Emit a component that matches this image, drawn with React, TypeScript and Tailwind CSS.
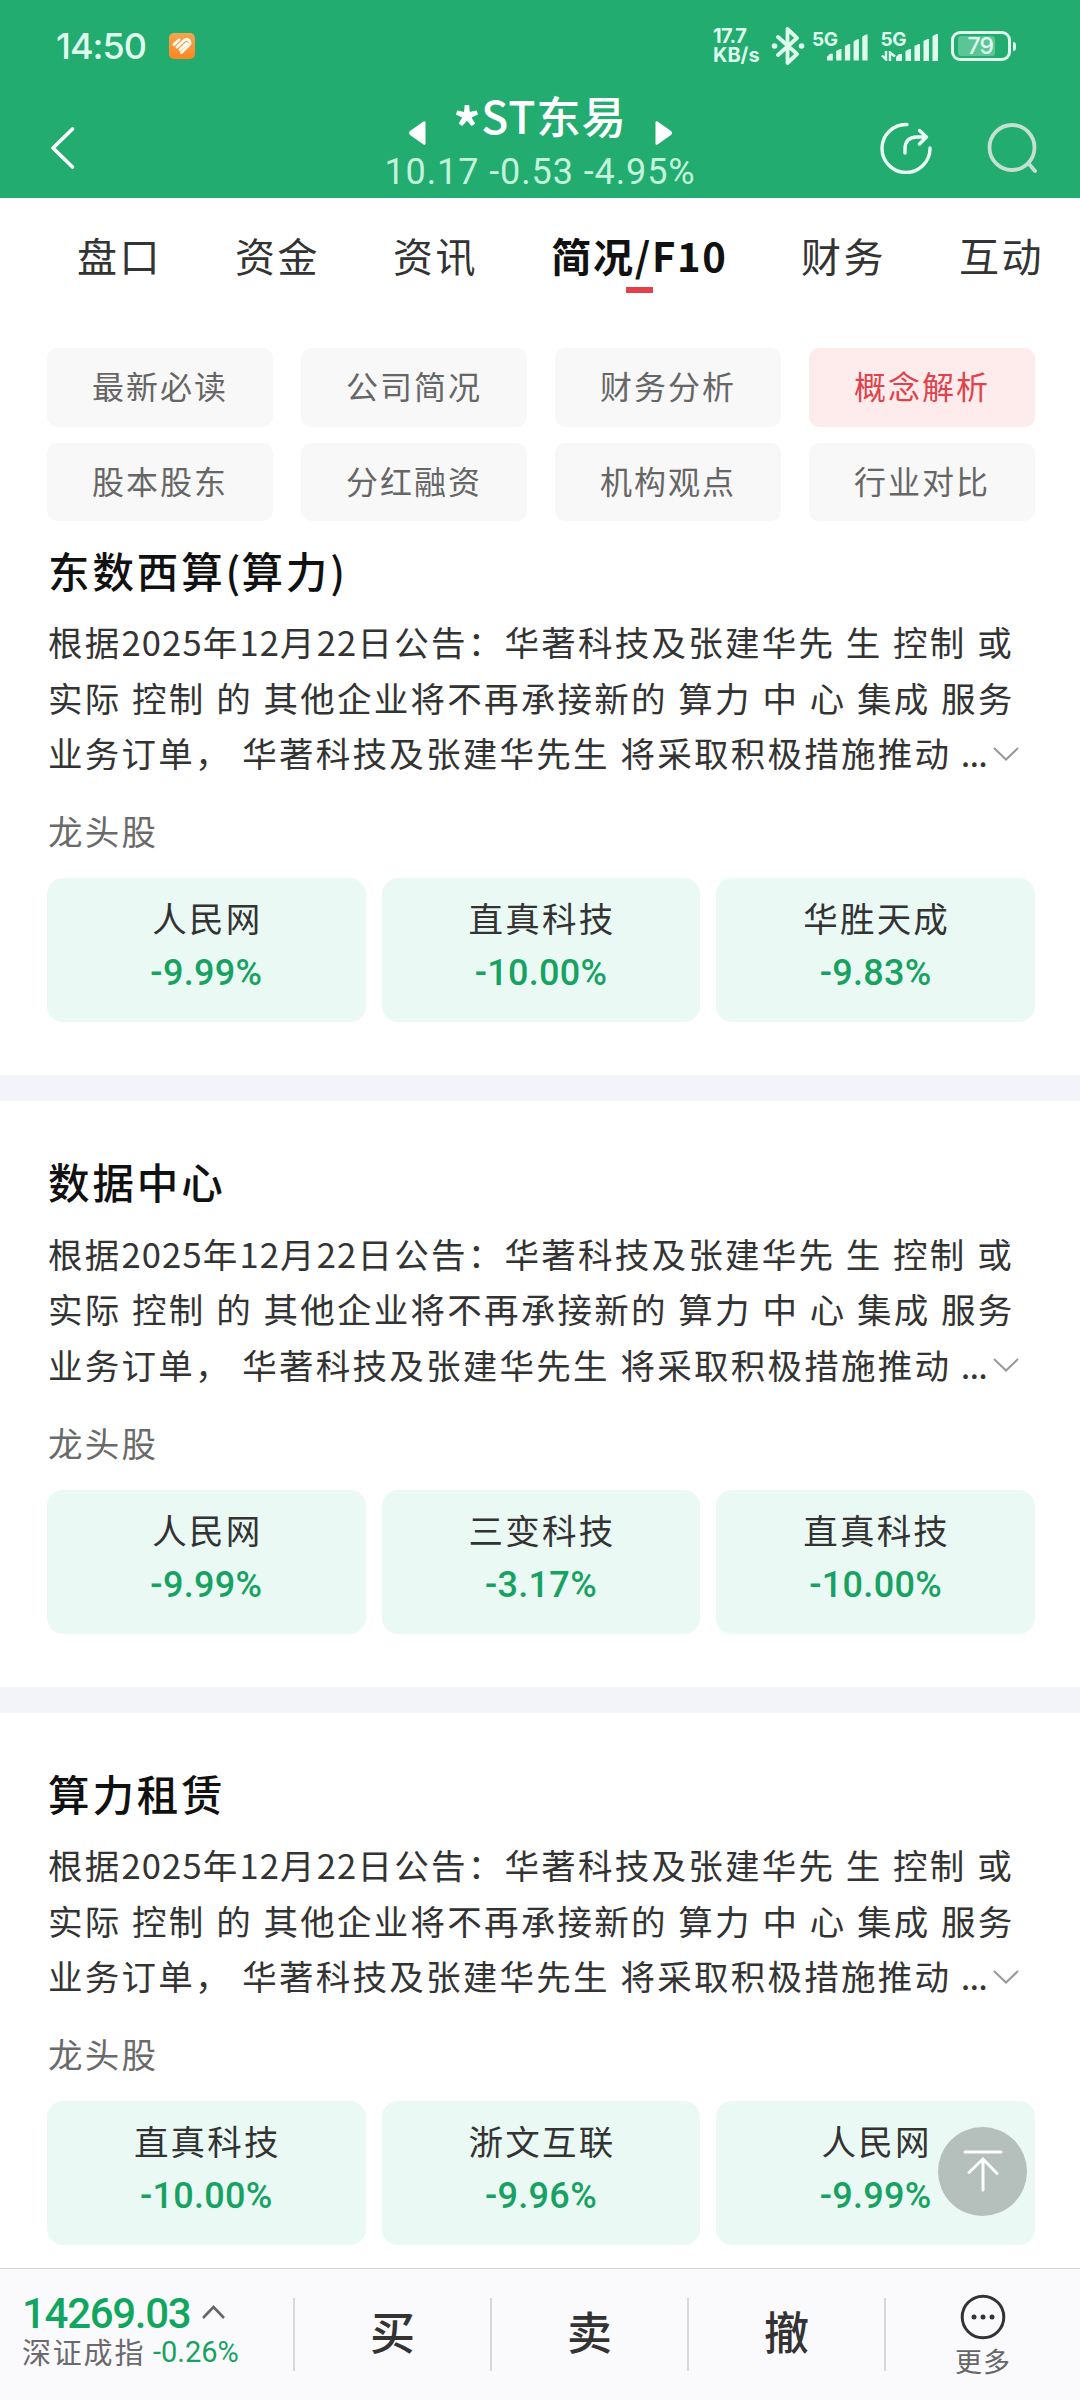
import type { ReactNode } from 'react'

const tabs = ['盘口', '资金', '资讯', '简况/F10', '财务', '互动']
const activeTab = '简况/F10'

const chips = ['最新必读', '公司简况', '财务分析', '概念解析', '股本股东', '分红融资', '机构观点', '行业对比']
const activeChip = '概念解析'

const summary = [
  '根据2025年12月22日公告：华著科技及张建华先 生 控制 或',
  '实际 控制 的 其他企业将不再承接新的 算力 中 心 集成 服务',
  '业务订单， 华著科技及张建华先生 将采取积极措施推动 ...',
]

type Stock = { name: string; change: string }

const concepts: { title: string; stocks: Stock[] }[] = [
  {
    title: '东数西算(算力)',
    stocks: [
      { name: '人民网', change: '-9.99%' },
      { name: '直真科技', change: '-10.00%' },
      { name: '华胜天成', change: '-9.83%' },
    ],
  },
  {
    title: '数据中心',
    stocks: [
      { name: '人民网', change: '-9.99%' },
      { name: '三变科技', change: '-3.17%' },
      { name: '直真科技', change: '-10.00%' },
    ],
  },
  {
    title: '算力租赁',
    stocks: [
      { name: '直真科技', change: '-10.00%' },
      { name: '浙文互联', change: '-9.96%' },
      { name: '人民网', change: '-9.99%' },
    ],
  },
]

function SignalBars() {
  return (
    <svg width="42" height="27" viewBox="0 0 42 27" fill="currentColor">
      <path d="M0 27v-4l3-3h3v7zM9.5 27V17l4-2h1.500v12zM18.500 27V12l4-2h1.500v17zM27.500 27V7l4-2h1.500v22zM36.500 27V2l4-2h1.500v27z" />
    </svg>
  )
}

function StatusBar() {
  return (
    <div className="flex h-[92px] items-center pl-[56px] pr-[64px] font-['Inter'] text-[#defbee]">
      <span className="w-[113px] text-[36px] font-medium leading-none tracking-[-1px]">14:50</span>
      <svg width="26" height="26" viewBox="0 0 26 26">
        <defs>
          <linearGradient id="app" x1="0" y1="0" x2="0" y2="1">
            <stop offset="0" stopColor="#f3a652" />
            <stop offset="1" stopColor="#ff8622" />
          </linearGradient>
        </defs>
        <rect width="26" height="26" rx="5" fill="url(#app)" />
        <path
          d="M5 11.500 10 7M8 14l7-6.500q3-2.500 5 0t0 4.500l-7.500 7.500M11 16.500 17.500 10.500"
          fill="none"
          stroke="#fffaf0"
          strokeWidth="2.900"
          strokeLinecap="round"
        />
      </svg>
      <div className="ml-auto flex items-center">
        <div className="w-[58px] text-[20px] font-bold leading-[19px]">
          <div className="tracking-[-0.6px]">17.7</div>
          <div>KB/s</div>
        </div>
        <svg width="34" height="38" viewBox="0 0 34 38" fill="none" stroke="currentColor" strokeWidth="3.800" strokeLinejoin="round" strokeLinecap="round">
          <path d="m7 10 19 17-9.500 9V2L26 11 7 28" />
          <path d="M3.500 19h.1M30.500 19h.1" strokeWidth="5.500" />
        </svg>
        <div className="ml-[7px] flex h-[30px] w-[56px] items-end justify-end">
          <span className="mr-[-10px] self-start text-[19px] font-bold leading-[17px] tracking-[-0.5px]">5G</span>
          <SignalBars />
        </div>
        <div className="ml-[12px] flex h-[30px] w-[58px] items-end justify-end">
          <div className="mr-[-10px] flex h-[30px] flex-col justify-between">
            <span className="text-[19px] font-bold leading-[17px] tracking-[-0.5px]">5G</span>
            <svg width="15" height="10" viewBox="0 0 15 10" fill="none" stroke="currentColor" strokeWidth="2.400">
              <path d="m1 4.500 4 4V0M9 10V1.500l5 4" />
            </svg>
          </div>
          <SignalBars />
        </div>
        <div className="ml-[13px] flex h-[30px] w-[60px] items-center rounded-[9px] border-[3px] border-current px-[4px]">
          <span className="flex h-[20px] w-[37px] items-center justify-end rounded-[3px] bg-[#5bc596] pr-[2px] text-[23px] font-medium leading-none tracking-[-1px]">79</span>
        </div>
        <span className="ml-[2px] h-[9px] w-[3px] rounded-r bg-current" />
      </div>
    </div>
  )
}

function TitleBar() {
  return (
    <div className="flex h-[106px] pl-[50px]">
      <svg className="mt-[34px]" width="26" height="44" viewBox="0 0 26 44" fill="none" stroke="#fff" strokeWidth="3.600" strokeLinecap="round" strokeLinejoin="round">
        <path d="M22.500 3 3 22l19.500 19" />
      </svg>
      <div className="ml-[309px] flex w-[310px] flex-col items-center">
        <div className="flex h-[58px] items-end">
          <svg className="mb-[5px] shrink-0" width="17" height="24" viewBox="0 0 17 24" fill="#fff">
            <path d="M14.500.5q2-.8 2 1v21q0 1.800-2 1L1 14q-2-2 0-4z" />
          </svg>
          <h1 className="mb-[5px] flex h-[60px] w-[229px] items-center justify-center whitespace-nowrap text-[44.500px] font-medium leading-[60px] tracking-[0.800px] text-white">
            <span className="pt-[22px] text-[54px] font-bold">*</span>
            <span>ST东易</span>
          </h1>
          <svg className="mb-[5px] shrink-0" width="17" height="24" viewBox="0 0 17 24" fill="#fff">
            <path d="M2.500.5q-2-.8-2 1v21q0 1.800 2 1L16 14q2-2 0-4z" />
          </svg>
        </div>
        <div className="mt-px whitespace-nowrap font-['Roboto'] text-[36px] leading-[42px] tracking-[0.900px] text-[#c4f3dd]">
          10.17 -0.53 -4.95%
        </div>
      </div>
      <div className="ml-[185px] mt-[30px] flex gap-[55px]">
        <svg width="52" height="52" viewBox="0 0 52 52" fill="none" stroke="#e9fff5" strokeWidth="3.400" strokeLinecap="round" strokeLinejoin="round">
          <path d="M27 2.500A24 24 0 1 0 50 26" />
          <path d="M25 31v-4q0-12 12-12h9M39.500 8.500l7 6.500-7 7" />
        </svg>
        <svg width="50" height="52" viewBox="0 0 50 52" fill="none" stroke="#c5e0d2" strokeWidth="3.800" strokeLinecap="round">
          <circle cx="25" cy="25.500" r="22.500" />
          <path d="m42 42 6 7" />
        </svg>
      </div>
    </div>
  )
}

function Tabs() {
  return (
    <nav className="flex h-[150px] gap-[73px] pl-[77px] pt-[29px] text-[40px] leading-[56px] tracking-[2.400px] text-[#333]">
      {tabs.map((tab) =>
        tab === activeTab ? (
          <div key={tab} className="flex w-[177px] flex-col items-center whitespace-nowrap font-bold text-[#111]">
            <span className="tracking-[1.700px]">{tab}</span>
            <span className="mt-[4px] h-[6px] w-[27px] bg-[#e2404a]" />
          </div>
        ) : (
          <div key={tab} className="w-[85px] shrink-0 whitespace-nowrap">{tab}</div>
        ),
      )}
    </nav>
  )
}

// Digits and the ellipsis are set tighter than the Chinese text around them
function SummaryLine({ text }: { text: string }) {
  return (
    <div>
      {text.split(/(\d+|\.{3})/).map((part, i) => {
        if (/^\d/.test(part)) return <span key={i} className="tracking-[1.150px]">{part}</span>
        if (part === '...') return <span key={i} className="-ml-[1px] tracking-[-0.800px]">{part}</span>
        return part
      })}
    </div>
  )
}

function StockCard({ name, change }: Stock) {
  return (
    <div className="flex h-[144px] flex-col items-center rounded-[16px] bg-[#ebf9f5] pt-[13px]">
      <span className="pl-[2px] text-[34.500px] leading-[52px] tracking-[2.200px] text-[#333]">{name}</span>
      <span className="mt-[8px] font-['Roboto'] text-[36px] font-medium leading-[44px] tracking-[0.300px] text-[#17a262]">{change}</span>
    </div>
  )
}

function Concept({ title, stocks }: { title: string; stocks: Stock[] }) {
  return (
    <section className="pr-[45px] pb-[53px] pl-[47px]">
      <h2 className="pl-[1px] text-[41.500px] font-medium leading-[56px] tracking-[2.900px] text-[#111]">
        {title.split(/([()])/).map((part, i) =>
          part === '(' || part === ')' ? <span key={i} className="tracking-[1px]">{part}</span> : part,
        )}
      </h2>
      <div className="mt-[16.500px] flex items-end justify-between pl-[1px] pr-[16px] text-[34.500px] leading-[55.500px] tracking-[2.250px] text-[#333]">
        <div className="w-0 whitespace-pre [word-spacing:0.600px]">
          {summary.map((line) => (
            <SummaryLine key={line} text={line} />
          ))}
        </div>
        <svg className="mb-[20px] shrink-0" width="26" height="14" viewBox="0 0 26 14" fill="none" stroke="#999" strokeWidth="2">
          <path d="m1 1 12 11.500L25 1" />
        </svg>
      </div>
      <div className="mt-[29.500px] pl-[1px] text-[34.500px] leading-[40px] tracking-[2.250px] text-[#6a6a6a]">龙头股</div>
      <div className="mt-[28px] grid grid-cols-3 gap-[16px]">
        {stocks.map((stock) => (
          <StockCard key={stock.name} {...stock} />
        ))}
      </div>
    </section>
  )
}

function Action({ children }: { children: ReactNode }) {
  return (
    <div className="flex h-[73px] w-[197px] items-center justify-center border-l-2 border-[#d8d8dc] pb-[8px] text-[45px] font-medium leading-none text-[#333]">
      {children}
    </div>
  )
}

function BottomBar() {
  return (
    <footer className="flex h-[132px] shrink-0 border-t border-[#d0d3d6] bg-[#fafafc] pt-[28px]">
      <div className="w-[293px] shrink-0 pl-[22px]">
        <div className="flex h-[34px] items-center font-['Roboto'] text-[42px] font-medium leading-[34px] tracking-[-1.300px] text-[#10a65f]">
          <span className="w-[180px]">14269.03</span>
          <svg className="-mt-[4px]" width="23" height="14" viewBox="0 0 23 14" fill="none" stroke="#666" strokeWidth="2.600">
            <path d="m1 13 10.500-11L22 13" />
          </svg>
        </div>
        <div className="mt-[2px] flex h-[36px] items-center whitespace-nowrap">
          <span className="w-[131px] text-[29px] leading-[36px] tracking-[1.800px] text-[#6a6a6e]">深证成指</span>
          <span className="pt-[2px] font-['Roboto'] text-[29px] leading-[36px] text-[#17a262]">-0.26%</span>
        </div>
      </div>
      <div className="flex pt-px">
        <Action>买</Action>
        <Action>卖</Action>
        <Action>撤</Action>
        <div className="flex h-[73px] w-[196px] flex-col items-center border-l-2 border-[#d8d8dc]">
          <svg className="-mt-[4px] shrink-0" width="46" height="46" viewBox="0 0 46 46">
            <circle cx="23" cy="23" r="20.800" fill="none" stroke="#333" strokeWidth="3" />
            <circle cx="14" cy="23" r="2.500" fill="#333" />
            <circle cx="23" cy="23" r="2.500" fill="#333" />
            <circle cx="32" cy="23" r="2.500" fill="#333" />
          </svg>
          <span className="mt-[3px] text-[27px] leading-[36px] tracking-[1px] text-[#666]">更多</span>
        </div>
      </div>
    </footer>
  )
}

export default function App() {
  return (
    <div className="relative flex h-[2400px] w-[1080px] flex-col overflow-hidden bg-white font-['Noto_Sans_CJK_SC',sans-serif]">
      <header className="h-[198px] shrink-0 bg-[#22ac6f]">
        <StatusBar />
        <TitleBar />
      </header>

      <main className="min-h-0 flex-1 overflow-hidden">
        <Tabs />
        <div className="grid grid-cols-4 gap-x-[28px] gap-y-[16px] pr-[45px] pl-[47px] text-[32px] tracking-[2px]">
          {chips.map((chip) => (
            <div
              key={chip}
              className={`flex h-[78.500px] items-center justify-center rounded-[10px] pb-[4px] leading-none ${
                chip === activeChip ? 'bg-[#feecec] text-[#df434c]' : 'bg-[#f8f8f8] text-[#666]'
              }`}
            >
              {chip}
            </div>
          ))}
        </div>
        <div className="pt-[20.500px]">
          {concepts.map((concept, i) => (
            <div key={concept.title}>
              {i > 0 && <div className="mb-[52px] h-[26px] bg-[#f3f4f9]" />}
              <Concept {...concept} />
            </div>
          ))}
        </div>
      </main>

      <BottomBar />

      {/* Back to top */}
      <button className="absolute right-[53px] bottom-[184px] flex h-[89px] w-[89px] items-center justify-center rounded-full bg-[#b5bfbc]">
        <svg width="40" height="44" viewBox="0 0 40 44" fill="none" stroke="#fff" strokeWidth="3" strokeLinecap="round">
          <path d="M2 2h36M20 9v31M6 22.500 20 9l14 14.500" />
        </svg>
      </button>
    </div>
  )
}
